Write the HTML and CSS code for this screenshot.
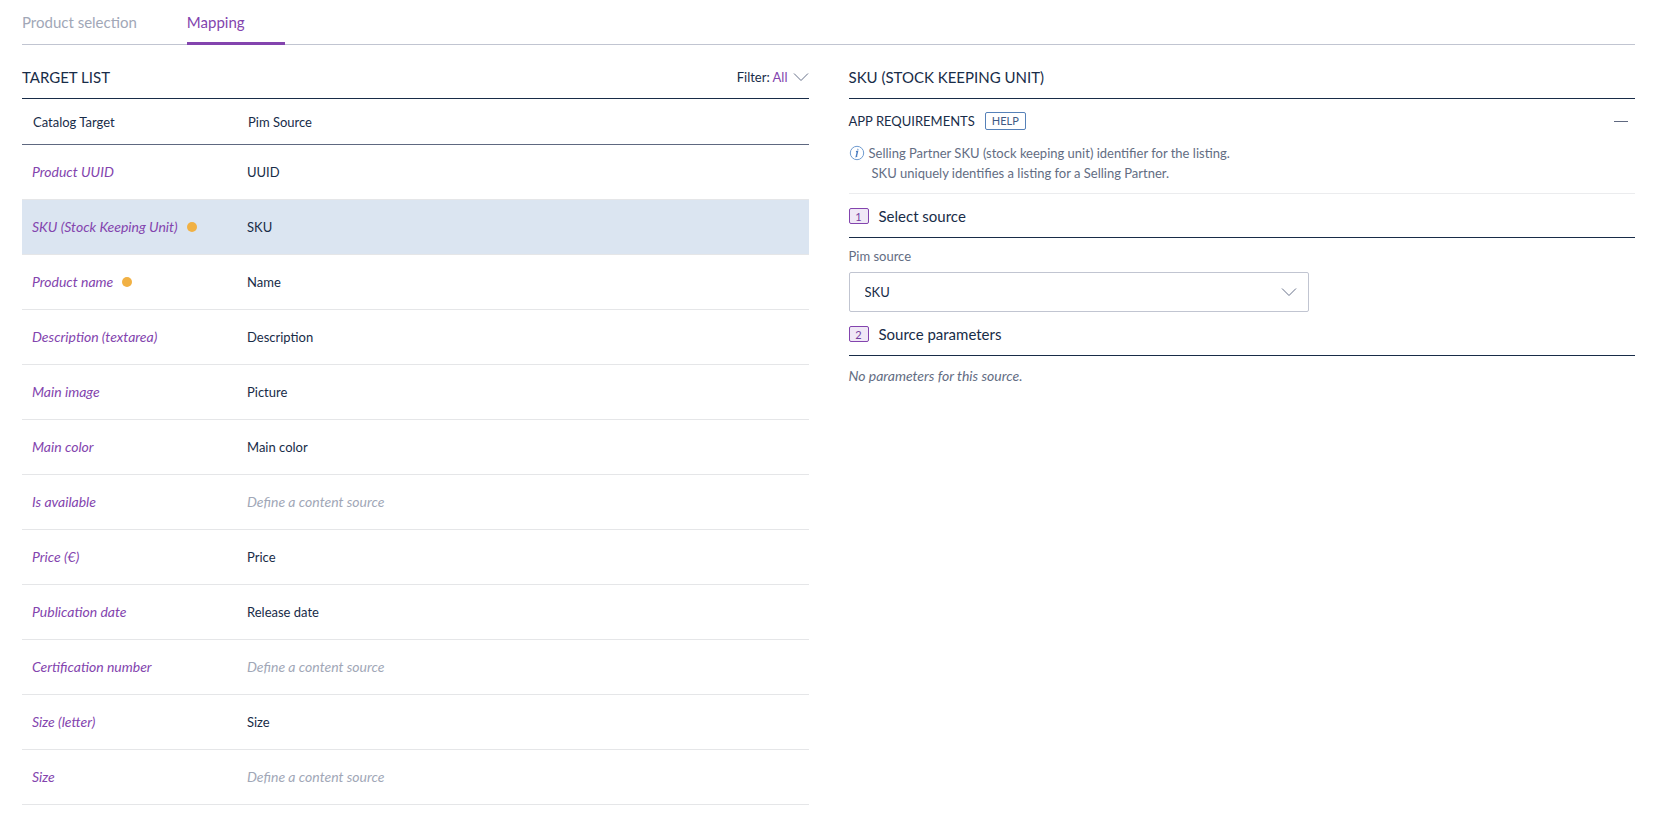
FILE: index.html
```
<!DOCTYPE html>
<html lang="en">
<head>
<meta charset="utf-8">
<title>Catalog mapping</title>
<link rel="stylesheet" href="styles.css">
</head>
<body>
<nav class="tabs" role="tablist">
  <button class="tab" role="tab" type="button">Product selection</button>
  <button class="tab tab-active" role="tab" type="button" aria-selected="true">Mapping</button>
</nav>
<main class="columns">
  <section class="panel">
    <header class="section-title">
      <h2 class="heading">TARGET LIST</h2>
      <button class="filter" type="button">
        <span>Filter: <span class="filter-value">All</span></span>
        <svg class="chevron" viewBox="0 0 16 16" aria-hidden="true"><path d="M1 4.5l7 7 7-7"/></svg>
      </button>
    </header>
    <table class="targets">
      <thead>
        <tr><th class="col-target">Catalog Target</th><th>Pim Source</th></tr>
      </thead>
      <tbody>
        <tr><td class="target">Product UUID</td><td>UUID</td></tr>
        <tr class="selected"><td class="target">SKU (Stock Keeping Unit)<span class="pill"></span></td><td>SKU</td></tr>
        <tr><td class="target">Product name<span class="pill"></span></td><td>Name</td></tr>
        <tr><td class="target">Description (textarea)</td><td>Description</td></tr>
        <tr><td class="target">Main image</td><td>Picture</td></tr>
        <tr><td class="target">Main color</td><td>Main color</td></tr>
        <tr><td class="target">Is available</td><td class="placeholder">Define a content source</td></tr>
        <tr><td class="target">Price (€)</td><td>Price</td></tr>
        <tr><td class="target">Publication date</td><td>Release date</td></tr>
        <tr><td class="target">Certification number</td><td class="placeholder">Define a content source</td></tr>
        <tr><td class="target">Size (letter)</td><td>Size</td></tr>
        <tr><td class="target">Size</td><td class="placeholder">Define a content source</td></tr>
      </tbody>
    </table>
  </section>
  <section class="panel">
    <header class="section-title">
      <h2 class="heading">SKU (STOCK KEEPING UNIT)</h2>
    </header>
    <div class="requirements">
      <div class="requirements-head">
        <h3 class="subheading">APP REQUIREMENTS</h3>
        <span class="badge">HELP</span>
        <button class="collapse" type="button" aria-label="Collapse">
          <svg class="collapse-icon" viewBox="0 0 16 16" aria-hidden="true"><path d="M1 8.5h14"/></svg>
        </button>
      </div>
      <div class="helper">
        <svg class="info" viewBox="0 0 16 16" aria-hidden="true">
          <circle cx="8" cy="8" r="6.7"/>
          <path class="info-mark" d="M7 6.6l1.5-.3-1.2 5.2.9-.3M8.9 3.8l-.2.9"/>
        </svg>
        <p class="helper-text">Selling Partner SKU (stock keeping unit) identifier for the listing.<br>SKU uniquely identifies a listing for a Selling Partner.</p>
      </div>
    </div>
    <div class="step">
      <span class="step-number">1</span>
      <h3 class="step-title">Select source</h3>
    </div>
    <div class="field">
      <label class="label" for="source">Pim source</label>
      <div class="select-box">
        <select class="select" id="source"><option>SKU</option></select>
        <svg class="chevron select-chevron" viewBox="0 0 16 16" aria-hidden="true"><path d="M1 4.5l7 7 7-7"/></svg>
      </div>
    </div>
    <div class="step">
      <span class="step-number">2</span>
      <h3 class="step-title">Source parameters</h3>
    </div>
    <p class="empty">No parameters for this source.</p>
  </section>
</main>
</body>
</html>
```
FILE: styles.css
```
* {
  box-sizing: border-box;
}

body {
  margin: 0;
  padding: 0 19px 0 22px;
  background: #fff;
  color: #182c48;
  font: 13px/20px Lato, "Open Sans", sans-serif;
}

button,
select {
  border: 0;
  padding: 0;
  background: none;
  color: inherit;
  font: inherit;
}

h2,
h3,
p {
  margin: 0;
  font-weight: 400;
}

.tabs {
  display: flex;
  gap: 10px;
  height: 45px;
  border-bottom: 1px solid #c1c5d1;
}

.tab {
  height: 45px;
  padding: 2px 40px 0 0;
  border-bottom: 3px solid transparent;
  color: #a1a7b7;
  font-size: 15px;
}

.tab-active {
  border-color: #8344ae;
  color: #8344ae;
}

.columns {
  display: grid;
  grid-template-columns: 1fr 1fr;
  gap: 40px;
  padding-top: 10px;
}

.section-title {
  display: flex;
  align-items: center;
  justify-content: space-between;
  height: 44px;
  border-bottom: 1px solid #182c48;
}

.heading {
  font-size: 15px;
}

.filter {
  display: flex;
  align-items: center;
  gap: 5px;
}

.filter-value {
  color: #8344ae;
}

.chevron {
  width: 16px;
  height: 16px;
  fill: none;
  stroke: #67718a;
}

.targets {
  width: 100%;
  table-layout: fixed;
  border-collapse: separate;
  border-spacing: 0;
}

.targets th {
  height: 46px;
  padding: 0 11px;
  border-bottom: 1px solid #5e6880;
  font-weight: 400;
  text-align: left;
}

.col-target {
  width: 215px;
}

.targets td {
  height: 55px;
  padding: 0 10px;
  border-bottom: 1px solid #e5e6e8;
}

.targets .target {
  color: #8344ae;
  font-size: 14px;
  font-style: italic;
}

.targets .placeholder {
  color: #a1a7b7;
  font-size: 14px;
  font-style: italic;
}

.selected {
  background: #dbe5f1;
}

.pill {
  display: inline-block;
  width: 10px;
  height: 10px;
  margin-left: 9px;
  border-radius: 50%;
  background: #f1b144;
}

.requirements {
  padding-bottom: 10px;
  border-bottom: 1px solid #ebecee;
}

.requirements-head {
  display: flex;
  align-items: center;
  gap: 10px;
  height: 44px;
}

.subheading {
  font-size: 13px;
}

.badge {
  height: 18px;
  padding: 0 6px;
  border: 1px solid #5681b8;
  border-radius: 2px;
  color: #3f5a85;
  font-size: 11px;
  line-height: 16px;
}

.collapse {
  display: flex;
  margin-left: auto;
  padding: 0 6px;
}

.collapse-icon {
  width: 16px;
  height: 16px;
  fill: none;
  stroke: #5e6880;
}

.helper {
  display: flex;
  gap: 7px;
  color: #636d83;
}

.info {
  flex: none;
  width: 16px;
  height: 16px;
  margin-top: 2px;
  fill: none;
  stroke: #6f9bd0;
}

.info-mark {
  stroke: #4a7cc0;
  stroke-width: 1.4;
}

.helper-text {
  text-indent: -3px;
}

.step {
  display: flex;
  align-items: center;
  gap: 10px;
  height: 44px;
  border-bottom: 1px solid #182c48;
}

.step-number {
  width: 20px;
  height: 16px;
  border: 1px solid #8344ae;
  border-radius: 2px;
  background: #f0e8f6;
  color: #763e9e;
  font-size: 11px;
  line-height: 16px;
  text-align: center;
}

.step-title {
  font-size: 15px;
}

.field {
  padding-top: 8px;
}

.label {
  display: block;
  margin-bottom: 6px;
  color: #636d83;
}

.select-box {
  display: grid;
  align-items: center;
  max-width: 460px;
}

.select {
  grid-area: 1 / 1;
  height: 40px;
  padding: 0 15px;
  border: 1px solid #c1c5d1;
  border-radius: 2px;
  appearance: none;
}

.select-chevron {
  grid-area: 1 / 1;
  justify-self: end;
  margin-right: 12px;
  pointer-events: none;
}

.empty {
  padding-top: 10px;
  color: #636d83;
  font-size: 14px;
  font-style: italic;
}
```
